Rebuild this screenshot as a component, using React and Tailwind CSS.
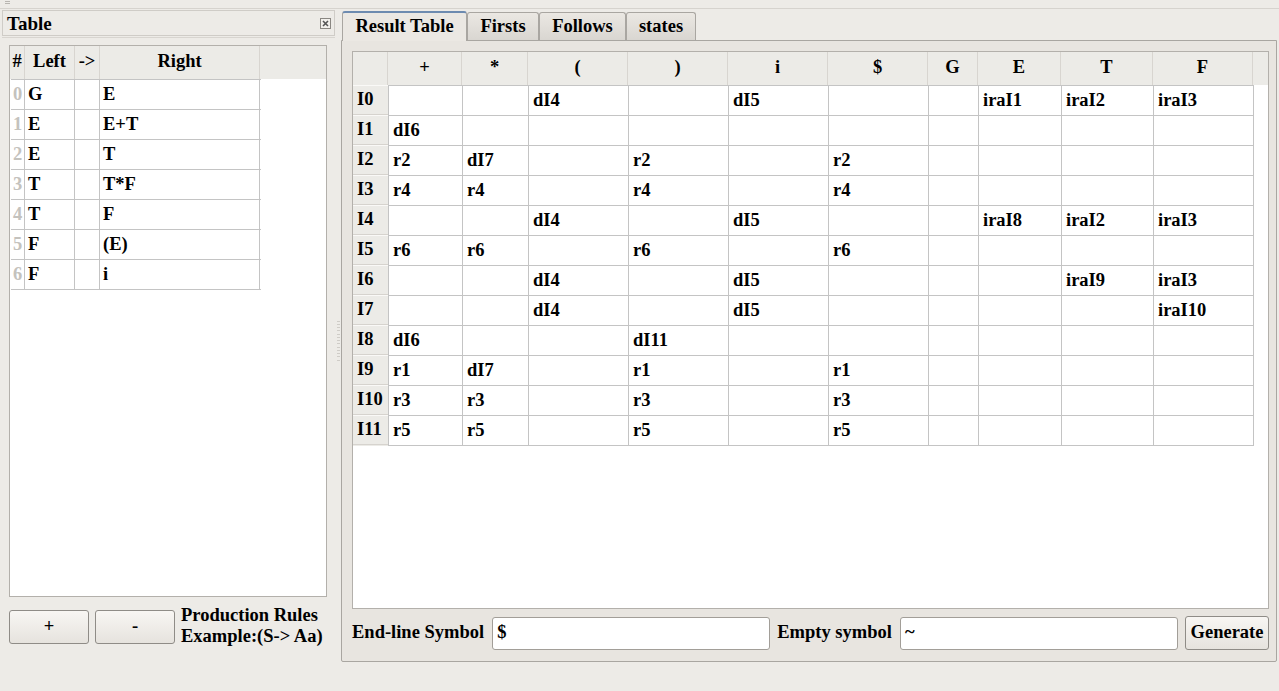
const font = { fontFamily: '"Liberation Serif", "Times New Roman", serif' };

const rules = [
  ['G', 'E'],
  ['E', 'E+T'],
  ['E', 'T'],
  ['T', 'T*F'],
  ['T', 'F'],
  ['F', '(E)'],
  ['F', 'i'],
];

const cols = [
  { label: '+', w: 'w-[74px]' },
  { label: '*', w: 'w-[66px]' },
  { label: '(', w: 'w-[100px]' },
  { label: ')', w: 'w-[100px]' },
  { label: 'i', w: 'w-[100px]' },
  { label: '$', w: 'w-[100px]' },
  { label: 'G', w: 'w-[50px]' },
  { label: 'E', w: 'w-[83px]' },
  { label: 'T', w: 'w-[92px]' },
  { label: 'F', w: 'w-[100px]' },
];

const states = [
  ['', '', 'dI4', '', 'dI5', '', '', 'iraI1', 'iraI2', 'iraI3'],
  ['dI6', '', '', '', '', '', '', '', '', ''],
  ['r2', 'dI7', '', 'r2', '', 'r2', '', '', '', ''],
  ['r4', 'r4', '', 'r4', '', 'r4', '', '', '', ''],
  ['', '', 'dI4', '', 'dI5', '', '', 'iraI8', 'iraI2', 'iraI3'],
  ['r6', 'r6', '', 'r6', '', 'r6', '', '', '', ''],
  ['', '', 'dI4', '', 'dI5', '', '', '', 'iraI9', 'iraI3'],
  ['', '', 'dI4', '', 'dI5', '', '', '', '', 'iraI10'],
  ['dI6', '', '', 'dI11', '', '', '', '', '', ''],
  ['r1', 'dI7', '', 'r1', '', 'r1', '', '', '', ''],
  ['r3', 'r3', '', 'r3', '', 'r3', '', '', '', ''],
  ['r5', 'r5', '', 'r5', '', 'r5', '', '', '', ''],
];

export default function App() {
  return (
    <div style={font} className="w-[1279px] h-[691px] bg-[#edebe7] text-black font-bold flex flex-col overflow-hidden">
      {/* top grip strip */}
      <div className="h-[9px] border-b border-[#d6d3ce] flex items-start px-[5px]">
        <div className="mt-[1px] w-[5px] flex flex-col gap-[1px]">
          <div className="h-px bg-[#b8b5b0]" />
          <div className="h-px bg-[#b8b5b0]" />
        </div>
      </div>

      <div className="flex flex-1 pt-[1px]">
        {/* Left dock */}
        <aside className="w-[333px] ml-[2px] flex flex-col">
          <div className="h-[26px] border border-[#cfccc7] flex items-center justify-between pl-[4px] pr-[3px]">
            <span className="text-[19px] leading-none">Table</span>
            <CloseIcon />
          </div>
          <div className="h-px bg-[#d8d5d0] mt-[1px]" />
          <div className="ml-[7px] mr-[8px] mt-[7px] h-[552px] border border-[#b3b0ab] bg-white">
            <div className="flex h-[33px] bg-[#ecebe7] text-[18.5px]">
              <HeadCell w="w-[15px]">#</HeadCell>
              <HeadCell w="w-[50px]">Left</HeadCell>
              <HeadCell w="w-[25px]">-&gt;</HeadCell>
              <HeadCell w="w-[160px]">Right</HeadCell>
            </div>
            <div className="border-t border-[#c4c4c4] w-[250px] ml-[1px]">
              {rules.map(([l, r], i) => (
                <div key={i} className="flex h-[30px] border-b border-[#c4c4c4] text-[18.5px]">
                  <div className="w-[14px] flex items-center justify-center border-r border-[#c4c4c4] text-[#c4c2bd]">{i}</div>
                  <div className="w-[50px] flex items-center pl-[3px] border-r border-[#c4c4c4]">{l}</div>
                  <div className="w-[25px] border-r border-[#c4c4c4]" />
                  <div className="w-[160px] flex items-center pl-[3px] border-r border-[#c4c4c4]">{r}</div>
                </div>
              ))}
            </div>
          </div>
          <div className="flex items-start mt-[13px] ml-[7px]">
            <Btn className="w-[80px] h-[34px]">+</Btn>
            <Btn className="w-[80px] h-[34px] ml-[6px]">-</Btn>
            <div className="ml-[6px] text-[18.5px] leading-[21px] -mt-[5px]">
              <div>Production Rules</div>
              <div>Example:(S-&gt; Aa)</div>
            </div>
          </div>
        </aside>

        {/* splitter */}
        <div className="w-[6px] flex items-center justify-center">
          <div className="w-[3px] h-[40px] flex flex-col justify-between mt-[-20px]">
            {Array.from({ length: 13 }).map((_, i) => (
              <div key={i} className="h-px bg-[#cfccc7]" />
            ))}
          </div>
        </div>

        {/* Right tabs */}
        <section className="w-[936px] flex flex-col">
          <div className="flex items-end h-[30px] pl-[1px]">
            <div className="h-[30px] w-[125px] bg-[#ebe8e3] border border-b-0 border-[#a9a6a1] border-t-2 border-t-[#6d8bb0] rounded-t-[3px] flex items-center justify-center text-[18.5px] relative top-px z-10">
              Result Table
            </div>
            <Tab w="w-[72px]">Firsts</Tab>
            <Tab w="w-[87px]">Follows</Tab>
            <Tab w="w-[70px]">states</Tab>
          </div>
          <div className="h-[622px] border border-[#a9a6a1] bg-[#e8e5e0] rounded-b-[2px] flex flex-col pl-[10px] pr-[7px] pt-[10px]">
            <div className="h-[558px] border border-[#b3b0ab] bg-white">
              <div className="flex h-[33px] bg-[#ecebe7] text-[18.5px]">
                <HeadCell w="w-[35px]" />
                {cols.map((c) => (
                  <HeadCell key={c.label} w={c.w}>{c.label}</HeadCell>
                ))}
              </div>
              <div className="flex">
                <div className="w-[35px] bg-[#ecebe7] text-[18.5px]">
                  {states.map((_, i) => (
                    <div key={i} className="h-[30px] flex items-center pl-[4px] border-t border-[#faf9f7] border-b border-b-[#d6d3ce]">
                      I{i}
                    </div>
                  ))}
                </div>
                <div className="border-t border-l border-[#c4c4c4]">
                  {states.map((row, i) => (
                    <div key={i} className="flex h-[30px] border-b border-[#c4c4c4] text-[18.5px]">
                      {row.map((v, j) => (
                        <div key={j} className={`${cols[j].w} flex items-center pl-[4px] border-r border-[#c4c4c4]`}>
                          {v}
                        </div>
                      ))}
                    </div>
                  ))}
                </div>
              </div>
            </div>
            <div className="flex items-center mt-[7px] h-[34px] text-[18.5px]">
              <span className="whitespace-nowrap">End-line Symbol</span>
              <Input className="flex-1 ml-[8px]">$</Input>
              <span className="ml-[7px] whitespace-nowrap">Empty symbol</span>
              <Input className="flex-1 ml-[8px]">~</Input>
              <Btn className="w-[84px] h-[34px] ml-[7px]">Generate</Btn>
            </div>
          </div>
        </section>
      </div>
    </div>
  );
}

function HeadCell({ w, children }) {
  return (
    <div className={`${w} h-full flex items-center justify-center border-r border-[#d8d5d0] pb-[2px]`}>
      {children}
    </div>
  );
}

function Tab({ w, children }) {
  return (
    <div className={`${w} h-[28px] bg-gradient-to-b from-[#ebe8e3] to-[#d9d6d1] border border-b-0 border-[#a9a6a1] rounded-t-[3px] flex items-center justify-center text-[18.5px]`}>
      {children}
    </div>
  );
}

function Btn({ className, children }) {
  return (
    <div className={`${className} rounded-[3px] border border-[#8f8c87] bg-gradient-to-b from-[#f8f6f3] to-[#e6e3de] flex items-center justify-center text-[18.5px]`}>
      {children}
    </div>
  );
}

function Input({ className, children }) {
  return (
    <div className={`${className} h-[33px] rounded-[3px] border border-[#a29e98] bg-white flex items-center pl-[4px] text-[18.5px]`}>
      {children}
    </div>
  );
}

function CloseIcon() {
  return (
    <svg width="11" height="11" viewBox="0 0 11 11">
      <rect x="0.5" y="0.5" width="10" height="10" fill="#f2f0ec" stroke="#8a8782" />
      <path d="M3 3l5 5M8 3l-5 5" stroke="#555" strokeWidth="1.6" />
    </svg>
  );
}
